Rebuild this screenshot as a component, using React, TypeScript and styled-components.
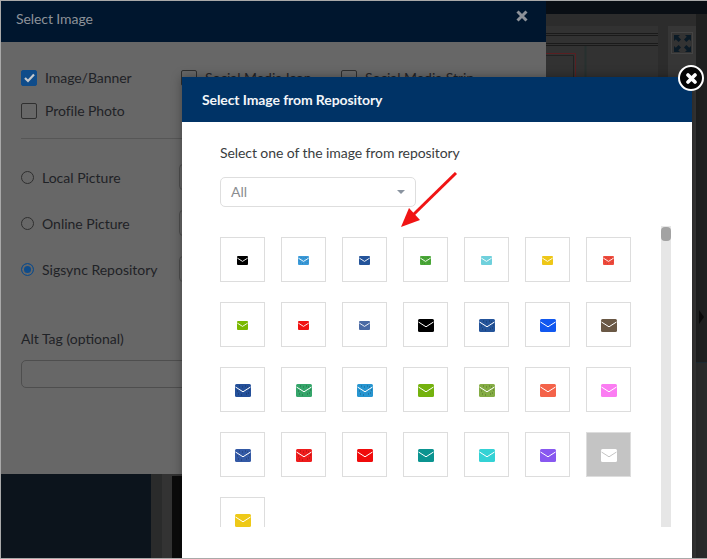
import React from 'react';
import styled, { createGlobalStyle } from 'styled-components';

const GlobalStyle = createGlobalStyle`
  html, body {
    margin: 0;
    padding: 0;
    background: #fff;
  }
  * {
    box-sizing: border-box;
  }
`;

const tiles = [
  '#000000', '#3a9ad9', '#24549a', '#4aa838', '#6fd0dc', '#eec718', '#f04a3c',
  '#7ab800', '#f01010', '#4a6aa5', '#000000', '#24549a', '#1158f0', '#6a5845',
  '#24509a', '#35a56a', '#2795d0', '#74b20e', '#84ac44', '#f4634a', '#fb7cf2',
  '#3359a5', '#ee1c1c', '#f00b0b', '#0b9490', '#34d2d5', '#8858f0', '#ffffff',
  '#eec918',
];

// the speckled envelopes in the repository
const speckled = [1, 3, 6, 11, 14, 15, 16, 18, 21, 22];
const speckles = 'M3 10h1M6 11h1M11 10h1M13 9h1M2 7h1M14 6h1M7 3h1M10 2h1M4 2h1M12 3h1';

const Envelope = ({
  color,
  small,
  flap,
  dots,
}: {
  color: string;
  small: boolean;
  flap: string;
  dots: boolean;
}) => (
  <svg width={small ? 11 : 16} height={small ? 9 : 13} viewBox="0 0 16 13">
    <rect width="16" height="13" rx="1.5" fill={color} />
    {dots && <path d={speckles} stroke="rgba(0,0,0,0.35)" strokeWidth="1" />}
    <path d="M0.5 3 L8 7.8 L15.5 3" fill="none" stroke={flap} strokeWidth={small ? 1.3 : 1} />
  </svg>
);

const App = () => {
  return (
    <Stage>
      <GlobalStyle />
      <TopBar />
      <Workspace>
        <LeftColumn />
        <StripOne />
        <StripTwo />
        <Canvas>
          <svg width="486" height="533" viewBox="0 0 486 533">
            <rect x="0" y="450" width="10" height="83" fill="#0b0b0b" />
            <g fill="none" strokeWidth="1">
              <path d="M374 7.5H486M374 9.5H486M374 17.5H486M374 19.5H486" stroke="#1a1a1a" />
              <path d="M374 27.5H403.5V60" stroke="#5a1f22" />
              <path d="M374 29.5H401.5V60" stroke="#222" />
              <path d="M413.5 20V60" stroke="#27302f" strokeWidth="2" />
            </g>
          </svg>
        </Canvas>
        <Gutter />
        <ToolPanel>
          <ToolButton>
            <svg width="17" height="17" viewBox="0 0 17 17" fill="#0a1a26">
              <path d="M0 0H6L4.2 1.8L7 4.6L4.6 7L1.8 4.2L0 6Z" />
              <path d="M17 0H11L12.8 1.8L10 4.6L12.4 7L15.2 4.2L17 6Z" />
              <path d="M0 17H6L4.2 15.2L7 12.4L4.6 10L1.8 12.8L0 11Z" />
              <path d="M17 17H11L12.8 15.2L10 12.4L12.4 10L15.2 12.8L17 11Z" />
            </svg>
          </ToolButton>
        </ToolPanel>
        <EdgePanel>
          <EdgeToggle>
            <svg width="5" height="14" viewBox="0 0 5 14">
              <path d="M0 0L5 7L0 14Z" fill="#0b0b0b" />
            </svg>
          </EdgeToggle>
        </EdgePanel>
      </Workspace>

      <BackModal>
        <BackHeader>
          <BackTitle>Select Image</BackTitle>
          <BackClose width="12" height="12" viewBox="0 0 12 12">
            <path d="M1.5 1.5L10.5 10.5M10.5 1.5L1.5 10.5" stroke="#8d9299" strokeWidth="3" />
          </BackClose>
        </BackHeader>
        <BackBody>
          <CheckGrid>
            <CheckRow>
              <CheckBox $checked>
                <svg width="11" height="10" viewBox="0 0 11 10">
                  <path d="M1 5L4 8L10 1.5" fill="none" stroke="#c4c8cc" strokeWidth="2.2" />
                </svg>
              </CheckBox>
              <BackLabel>Image/Banner</BackLabel>
            </CheckRow>
            <CheckRow>
              <CheckBox />
              <BackLabel>Social Media Icon</BackLabel>
            </CheckRow>
            <CheckRow>
              <CheckBox />
              <BackLabel>Social Media Strip</BackLabel>
            </CheckRow>
            <CheckRow>
              <CheckBox />
              <BackLabel>Profile Photo</BackLabel>
            </CheckRow>
          </CheckGrid>
          <Divider />
          <RadioList>
            {['Local Picture', 'Online Picture', 'Sigsync Repository'].map((label, i) => (
              <RadioRow key={label}>
                <Radio $checked={i === 2} />
                <RadioLabel>{label}</RadioLabel>
                <RadioInput />
              </RadioRow>
            ))}
          </RadioList>
          <AltLabel>Alt Tag (optional)</AltLabel>
          <AltInput />
        </BackBody>
      </BackModal>

      <FrontModal>
        <FrontHeader>Select Image from Repository</FrontHeader>
        <FrontBody>
          <Intro>Select one of the image from repository</Intro>
          <FakeSelect>
            All
            <Caret />
          </FakeSelect>
          <Scroller>
            <TileGrid>
              {tiles.map((color, i) => (
                <Tile key={i} $selected={color === '#ffffff'}>
                  <Envelope
                    color={color}
                    small={i < 10}
                    flap={color === '#ffffff' ? '#c4c4c4' : '#ffffff'}
                    dots={speckled.includes(i)}
                  />
                </Tile>
              ))}
            </TileGrid>
            <Track>
              <Thumb />
            </Track>
          </Scroller>
        </FrontBody>
        <CloseButton>
          <svg width="11" height="11" viewBox="0 0 11 11">
            <path d="M2 2L9 9M9 2L2 9" stroke="#fff" strokeWidth="3.6" strokeLinecap="round" />
          </svg>
        </CloseButton>
        <Pointer width="60" height="60" viewBox="0 0 60 60">
          <path d="M55 1L12 43" stroke="#f01414" strokeWidth="3" />
          <path d="M0 55L8 36L19 48Z" fill="#f01414" />
        </Pointer>
      </FrontModal>
    </Stage>
  );
};

export default App;

const Stage = styled.div`
  position: relative;
  width: 707px;
  height: 559px;
  overflow: hidden;
  display: flex;
  flex-direction: column;
  border-top: 1px solid #a9a9a9;
  border-left: 1px solid #a9a9a9;
  border-bottom: 1px solid #a9a9a9;
  background: #2c2c2c;
  font-family: Lato, 'Noto Sans', sans-serif;
`;

const TopBar = styled.div`
  height: 13px;
  flex: none;
  background: #090e14;
`;

const Workspace = styled.div`
  flex: 1;
  display: flex;
  min-height: 0;
`;

const LeftColumn = styled.div`
  width: 150px;
  background: #0c141c;
`;

const StripOne = styled.div`
  width: 11px;
  background: #2a2b2b;
`;

const StripTwo = styled.div`
  width: 10px;
  background: #333333;
`;

const Canvas = styled.div`
  width: 486px;
  margin-top: 12px;
  background: #323232;
  overflow: hidden;
  svg {
    display: block;
  }
`;

const Gutter = styled.div`
  width: 10px;
`;

const ToolPanel = styled.div`
  width: 28px;
  margin-top: 12px;
  padding: 6px 3px;
  background: #363636;
`;

const ToolButton = styled.div`
  width: 22px;
  height: 22px;
  display: flex;
  align-items: center;
  justify-content: center;
  border: 1px solid #444;
  background: #333;
`;

const EdgePanel = styled.div`
  flex: 1;
  background: #2a2b2b;
`;

const EdgeToggle = styled.div`
  height: 349px;
  padding: 294px 0 0 3px;
  background: #1f2020;
  border-bottom: 1px solid #1c2a33;
`;

const BackModal = styled.div`
  position: absolute;
  left: 0;
  top: 0;
  width: 545px;
  height: 473px;
  background: #676767;
`;

const BackHeader = styled.div`
  height: 41px;
  display: flex;
  align-items: center;
  justify-content: space-between;
  padding: 0 18px 0 15px;
  background: #00162e;
`;

const BackTitle = styled.div`
  margin-bottom: 7px;
  font-size: 14px;
  letter-spacing: -0.08px;
  color: #8d9299;
`;

const BackClose = styled.svg`
  margin-bottom: 11px;
`;

const BackBody = styled.div`
  padding: 27px 20px 0;
`;

const CheckGrid = styled.div`
  display: grid;
  grid-template-columns: 160px 160px 1fr;
  row-gap: 16px;
`;

const CheckRow = styled.div`
  display: flex;
  align-items: center;
  gap: 8px;
  height: 17px;
`;

const CheckBox = styled.div<{ $checked?: boolean }>`
  width: 16px;
  height: 16px;
  display: flex;
  align-items: center;
  justify-content: center;
  border-radius: 2px;
  border: 1px solid ${(p) => (p.$checked ? '#0f4c8a' : '#2f2f2f')};
  background: ${(p) => (p.$checked ? '#0f4c8a' : 'transparent')};
`;

const BackLabel = styled.span`
  font-size: 14px;
  letter-spacing: -0.05px;
  color: #1f2226;
  white-space: nowrap;
`;

const Divider = styled.div`
  height: 1px;
  margin-top: 19px;
  background: #565656;
`;

const RadioList = styled.div`
  display: flex;
  flex-direction: column;
  gap: 20px;
  margin-top: 25px;
`;

const RadioRow = styled.div`
  display: flex;
  align-items: center;
  height: 26px;
`;

const Radio = styled.div<{ $checked?: boolean }>`
  width: 13px;
  height: 13px;
  flex: none;
  margin-right: 8px;
  border-radius: 50%;
  border: 1px solid ${(p) => (p.$checked ? '#0f4c8a' : '#2f2f2f')};
  background: ${(p) => (p.$checked ? '#0f4c8a' : 'transparent')};
  box-shadow: ${(p) => (p.$checked ? 'inset 0 0 0 2px #676767' : 'none')};
`;

const RadioLabel = styled.span`
  width: 137px;
  flex: none;
  font-size: 14px;
  color: #1f2226;
  white-space: nowrap;
`;

const RadioInput = styled.div`
  flex: 1;
  height: 26px;
  border: 1px solid #4e4e4e;
  border-radius: 4px;
`;

const AltLabel = styled.div`
  margin-top: 48px;
  font-size: 14px;
  line-height: 17px;
  color: #1f2226;
`;

const AltInput = styled.div`
  height: 28px;
  margin-top: 13px;
  border: 1px solid #4e4e4e;
  border-radius: 5px;
`;

const FrontModal = styled.div`
  position: absolute;
  left: 181px;
  top: 76px;
  width: 510px;
  height: 490px;
  background: #fff;
  box-shadow: 0 0 10px rgba(0, 0, 0, 0.35);
`;

const FrontHeader = styled.div`
  height: 45px;
  display: flex;
  align-items: center;
  padding-left: 20px;
  font-size: 14px;
  font-weight: 700;
  letter-spacing: -0.1px;
  color: #f2f5f8;
  background: #003366;
`;

const FrontBody = styled.div`
  padding: 22px 21px 0 38px;
`;

const Intro = styled.div`
  font-size: 14px;
  line-height: 17px;
  letter-spacing: -0.08px;
  color: #3a3d40;
`;

const FakeSelect = styled.div`
  position: relative;
  width: 196px;
  height: 30px;
  margin-top: 16px;
  padding: 0 0 2px 10px;
  display: flex;
  align-items: center;
  font-size: 14px;
  color: #8a8d90;
  border: 1px solid #dedede;
  border-radius: 5px;
`;

const Caret = styled.span`
  position: absolute;
  right: 10px;
  top: 12px;
  border-left: 4px solid transparent;
  border-right: 4px solid transparent;
  border-top: 4px solid #8a94a0;
`;

const Scroller = styled.div`
  display: flex;
  justify-content: space-between;
  width: 451px;
  height: 301px;
  margin-top: 19px;
  overflow: hidden;
`;

const TileGrid = styled.div`
  display: grid;
  grid-template-columns: repeat(7, 45px);
  grid-auto-rows: 45px;
  column-gap: 16px;
  row-gap: 20px;
  padding-top: 11px;
`;

const Tile = styled.div<{ $selected?: boolean }>`
  display: flex;
  align-items: center;
  justify-content: center;
  padding-top: 2px;
  border: 1px solid #dddddd;
  background: ${(p) => (p.$selected ? '#c4c4c4' : '#fff')};
`;

const Track = styled.div`
  width: 10px;
  height: 301px;
  padding-top: 1px;
  background: #e6e6e6;
`;

const Thumb = styled.div`
  height: 14px;
  border-radius: 4px;
  background: #a3a3a3;
`;

const CloseButton = styled.div`
  position: absolute;
  right: -12px;
  top: -12px;
  width: 26px;
  height: 26px;
  display: flex;
  align-items: center;
  justify-content: center;
  border: 2px solid #fff;
  border-radius: 50%;
  background: #050505;
`;

const Pointer = styled.svg`
  position: absolute;
  left: 219px;
  top: 95px;
`;
